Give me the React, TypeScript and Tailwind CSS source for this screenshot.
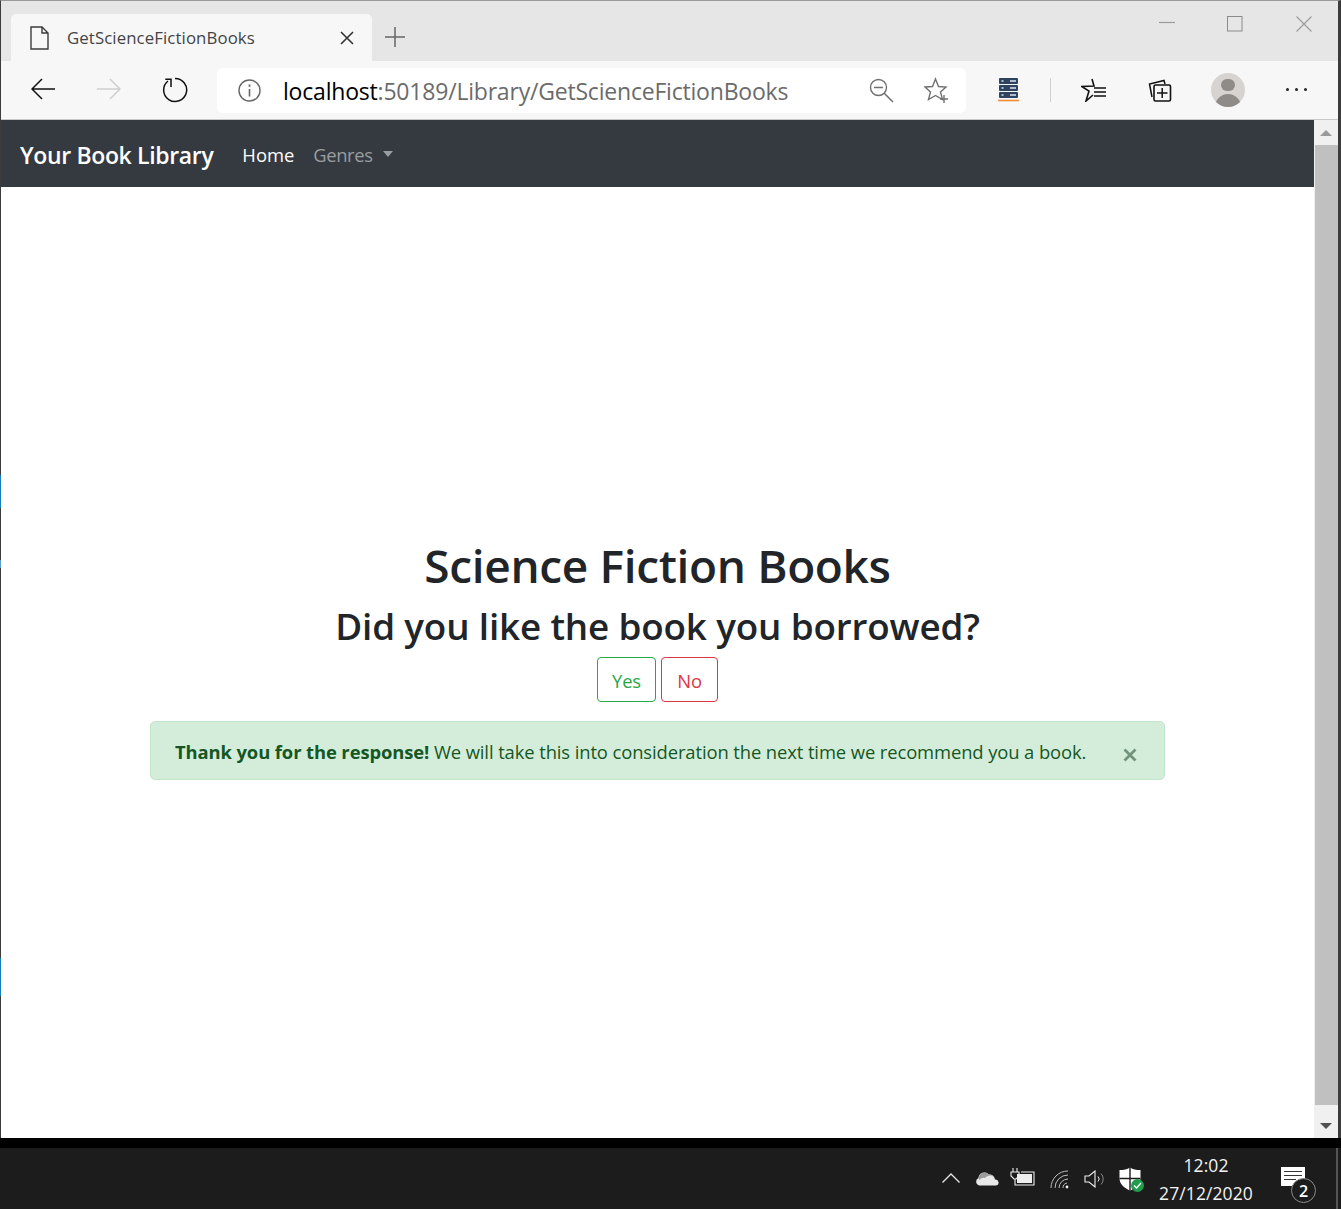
const font = "font-['Open_Sans','Noto_Sans',sans-serif]";

function Stroke({ w, h, children, className }: { w: number; h: number; children: React.ReactNode; className?: string }) {
  return (
    <svg width={w} height={h} viewBox={`0 0 ${w} ${h}`} fill="none" className={`shrink-0 ${className ?? ""}`}>
      {children}
    </svg>
  );
}

function TabStrip() {
  return (
    <div className="flex h-[60px] bg-[#e6e6e6] pl-[10px]">
      <div className="mt-[13px] flex h-[47px] w-[361px] items-center rounded-t-[5px] bg-[#f7f7f7] pl-[19px]">
        <Stroke w={19} h={24}>
          <path d="M1 1H12L18 7V23H1Z M12 1V7H18" stroke="#3c3c3c" strokeWidth="1.4" />
        </Stroke>
        <span className="ml-[18px] w-[271px] text-[16.8px] tracking-[0.1px] text-[#444]">GetScienceFictionBooks</span>
        <Stroke w={14} h={14} className="ml-[2px] mt-[1px]">
          <path d="M1 1L13 13M13 1L1 13" stroke="#333" strokeWidth="1.6" />
        </Stroke>
      </div>
      <Stroke w={20} h={20} className="ml-[13px] mt-[26px]">
        <path d="M10 0V20M0 10H20" stroke="#666" strokeWidth="1.5" />
      </Stroke>
      <div className="ml-auto mr-[26px] flex pt-[15px]">
        <Stroke w={16} h={16}>
          <path d="M0 6.5H16" stroke="#9a9a9a" strokeWidth="1.2" />
        </Stroke>
        <Stroke w={16} h={16} className="ml-[52px]">
          <rect x="0.5" y="0.5" width="14.5" height="14.5" stroke="#8a8a8a" />
        </Stroke>
        <Stroke w={16} h={16} className="ml-[53px]">
          <path d="M0.5 0.5L15.5 15.5M15.5 0.5L0.5 15.5" stroke="#9a9a9a" strokeWidth="1.1" />
        </Stroke>
      </div>
    </div>
  );
}

function Toolbar() {
  return (
    <div className="flex h-[59px] items-center border-b border-[#c9c9c9] bg-[#f7f7f7] pb-[1px]">
      <Stroke w={24} h={22} className="ml-[30px] mb-[1px]">
        <path d="M24 11H1M11 1L1 11L11 21" stroke="#111" strokeWidth="1.5" />
      </Stroke>
      <Stroke w={24} h={22} className="ml-[42px] mb-[1px]">
        <path d="M0 11H23M13 1L23 11L13 21" stroke="#cfcfcf" strokeWidth="1.5" />
      </Stroke>
      <Stroke w={26} h={26} className="ml-[41px]">
        <path d="M13 1.5A11.5 11.5 0 1 1 6 4" stroke="#111" strokeWidth="1.5" />
        <path d="M3.3 2.2H9V10" stroke="#111" strokeWidth="1.5" />
      </Stroke>
      <div className="ml-[29px] mt-[1px] flex h-[45px] w-[749px] items-center rounded-[6px] bg-white">
        <Stroke w={23} h={23} className="ml-[21px]">
          <circle cx="11.5" cy="11.5" r="10.5" stroke="#666" strokeWidth="1.4" />
          <path d="M11.5 10V17.5" stroke="#666" strokeWidth="1.6" />
          <path d="M11.5 5.5V7.7" stroke="#666" strokeWidth="1.8" />
        </Stroke>
        <span className="ml-[22px] mt-[2px] w-[586px] text-[23px] tracking-[-0.2px] text-[#6b6b6b]">
          <span className="text-black">localhost</span>:50189/Library/GetScienceFictionBooks
        </span>
        <Stroke w={25} h={25}>
          <circle cx="9.5" cy="9.5" r="8" stroke="#707070" strokeWidth="1.4" />
          <path d="M5 9.5H14M15 15L24 24" stroke="#707070" strokeWidth="1.5" />
        </Stroke>
        <Stroke w={26} h={26} className="ml-[30px]">
          <path d="M11.5 2L14.5 9.5L22 10L16.5 15L18.5 22.5L11.5 18.5L4.5 22.5L6.5 15L1 10L8.5 9.5Z" stroke="#707070" strokeWidth="1.4" />
          <path d="M20 18V26M16 22H24" stroke="#707070" strokeWidth="1.4" />
        </Stroke>
      </div>
      <Stroke w={21} h={24} className="ml-[32px]">
        <rect x="1" y="0" width="19" height="6" rx="1" fill="#2d4360" />
        <rect x="1" y="7" width="19" height="6" rx="1" fill="#2d4360" />
        <rect x="1" y="14" width="19" height="6" rx="1" fill="#2d4360" />
        <path d="M3.5 3H5.5M3.5 10H5.5M3.5 17H5.5M12 3H18M12 10H18M12 17H18" stroke="#dfe5ee" strokeWidth="1.4" />
        <path d="M0 22.5H21" stroke="#f28c38" strokeWidth="1.6" />
      </Stroke>
      <div className="ml-[31px] h-[24px] w-px bg-[#d0d0d0]" />
      <Stroke w={25} h={24} className="ml-[30px]">
        <path d="M11 1L13 8L0.8 8.5L8 13L5 23L12 17" stroke="#111" strokeWidth="1.6" />
        <path d="M13 10H25M13 14H25M13 18H25" stroke="#111" strokeWidth="1.5" />
      </Stroke>
      <Stroke w={24} h={24} className="ml-[42px]">
        <path d="M4 19L1.5 6L16 2.5L17 6" stroke="#111" strokeWidth="1.5" />
        <rect x="6" y="7" width="16.5" height="16" rx="1.5" stroke="#111" strokeWidth="1.6" />
        <path d="M14.2 10V20M9 15H19.5" stroke="#111" strokeWidth="1.5" />
      </Stroke>
      <div className="ml-[39px] flex size-[34px] flex-col items-center overflow-hidden rounded-full bg-[#d6d3d0]">
        <div className="mt-[6px] size-[14px] rounded-full bg-[#8f8b87]" />
        <div className="mt-[3px] h-[14px] w-[26px] rounded-t-full bg-[#8f8b87]" />
      </div>
      <div className="ml-[41px] flex gap-[6.5px]">
        <div className="size-[2.5px] rounded-full bg-[#222]" />
        <div className="size-[2.5px] rounded-full bg-[#222]" />
        <div className="size-[2.5px] rounded-full bg-[#222]" />
      </div>
    </div>
  );
}

function Navbar() {
  return (
    <nav className="flex h-[67px] items-center bg-[#343a40] pl-[19px] pt-[3px]">
      <span className="text-[23px] font-semibold leading-none tracking-[-0.35px] text-white">Your Book Library</span>
      <span className="ml-[29px] text-[18.4px] text-white">Home</span>
      <span className="ml-[19px] text-[18.4px] tracking-[-0.4px] text-[#9a9da0]">Genres</span>
      <div className="ml-[10px] mb-[3px] border-x-[5.5px] border-t-[6px] border-x-transparent border-t-[#9a9da0]" />
    </nav>
  );
}

function Content() {
  return (
    <main className="flex flex-1 flex-col items-center pt-[350px] text-[#212529]">
      <h1 className="text-[46px] font-semibold leading-[56px] tracking-[-0.35px]">Science Fiction Books</h1>
      <h2 className="mt-[10px] text-[36.8px] font-semibold leading-[46px] tracking-[-0.15px]">Did you like the book you borrowed?</h2>
      <div className="mt-[8px] flex gap-[5px]">
        <button className="h-[45px] w-[59px] rounded-[4px] border border-[#28a745] pt-[3px] text-[18.4px] tracking-[-0.12px] text-[#28a745]">Yes</button>
        <button className="h-[45px] w-[57px] rounded-[4px] border border-[#dc3545] pt-[3px] text-[18.4px] tracking-[-0.12px] text-[#dc3545]">No</button>
      </div>
      <div className="mt-[19px] flex h-[59px] w-[1015px] items-center rounded-[5px] border border-[#c3e6cb] bg-[#d4edda] pl-[24px] text-[18.4px] tracking-[-0.1px] text-[#155724]">
        <span className="mt-[3px] w-[948px] whitespace-nowrap">
          <strong className="font-bold">Thank you for the response!</strong> We will take this into consideration the next time we recommend you a book.
        </span>
        <Stroke w={14} h={14} className="mt-[8px]">
          <path d="M1.5 1.5L12.5 12.5M12.5 1.5L1.5 12.5" stroke="#71937b" strokeWidth="2.8" />
        </Stroke>
      </div>
    </main>
  );
}

function Scrollbar() {
  return (
    <div className="flex w-[24px] flex-col items-center bg-[#f0f0f0]">
      <div className="flex h-[25px] items-center">
        <div className="border-x-[6px] border-b-[6px] border-x-transparent border-b-[#9a9a9a]" />
      </div>
      <div className="w-[23px] flex-1 bg-[#c0c0c0]" />
      <div className="flex h-[33px] items-center pt-[9px]">
        <div className="border-x-[6px] border-t-[6px] border-x-transparent border-t-[#505050]" />
      </div>
    </div>
  );
}

function Tray() {
  return (
    <footer className="flex h-[61px] items-center bg-[#1c1c1c] pl-[942px] text-[#f2f2f2]">
      <Stroke w={18} h={10} className="mb-[2px]">
        <path d="M0.5 9.5L9 1L17.5 9.5" stroke="#e6e6e6" strokeWidth="1.3" />
      </Stroke>
      <Stroke w={25} h={16} className="ml-[15px] mb-[2px]">
        <path d="M4 15.5A4 4 0 0 1 3.5 8A6 6 0 0 1 14 4.5A5.5 5.5 0 0 1 20 9.5A3 3 0 0 1 21 15.5Z" fill="#e8e8e8" />
        <path d="M3.5 8A6 6 0 0 1 14 4.5A5.5 5.5 0 0 1 18 6.5A6 6 0 0 0 10 8A5 5 0 0 0 4.5 10Z" fill="#9c9c9c" />
      </Stroke>
      <Stroke w={25} h={19} className="ml-[10px] mb-[2px]">
        <path d="M3 0V4M7 0V4M1 4H9V8L6 11H4L1 8ZM5 11V17H24V4H11" stroke="#eee" strokeWidth="1.1" />
        <rect x="7" y="6" width="15" height="9" fill="#eee" />
      </Stroke>
      <Stroke w={20} h={20} className="ml-[15px]">
        <path d="M1 19A17 17 0 0 1 18 2M5 19A13 13 0 0 1 18 6M9 19A9 9 0 0 1 18 10M13 19A5 5 0 0 1 17 14" stroke="#bdbdbd" strokeWidth="1" />
        <circle cx="17" cy="18" r="1.4" fill="#eee" />
      </Stroke>
      <Stroke w={22} h={18} className="ml-[14px]">
        <path d="M1 6H5L11 1V17L5 12H1Z" stroke="#eee" strokeWidth="1.1" />
        <path d="M14 6.5A3.5 3.5 0 0 1 14 11.5" stroke="#eee" />
        <path d="M17 3.5A8 8 0 0 1 17 14.5" stroke="#888" />
      </Stroke>
      <div className="relative ml-[13px] size-[24px]">
        <Stroke w={22} h={24}>
          <path d="M11 0.5C14 2.5 17 3 21.5 3V11C21.5 17 17 21 11 23.5C5 21 0.5 17 0.5 11V3C5 3 8 2.5 11 0.5Z" fill="#fff" />
          <path d="M11 0V23.5M0.5 11.5H21.5" stroke="#1c1c1c" strokeWidth="1.4" />
        </Stroke>
        <div className="absolute -bottom-[1px] -right-[1px] flex size-[13px] items-center justify-center rounded-full bg-[#1f9d4d]">
          <Stroke w={9} h={7}>
            <path d="M1 3.5L3.5 6L8 1" stroke="#fff" strokeWidth="1.3" />
          </Stroke>
        </div>
      </div>
      <div className="ml-[13px] flex w-[100px] flex-col items-center gap-[6px] text-[17.5px] leading-[22px] tracking-[0.1px]">
        <span>12:02</span>
        <span className="whitespace-nowrap">27/12/2020</span>
      </div>
      <div className="relative ml-[25px] mt-[13px] size-[36px]">
        <div className="flex h-[19px] w-[24px] flex-col gap-[3px] bg-white pl-[3px] pt-[4px]">
          <div className="h-px w-[18px] bg-[#333]" />
          <div className="h-px w-[18px] bg-[#333]" />
          <div className="h-px w-[12px] bg-[#333]" />
        </div>
        <div className="absolute left-[10px] top-[11px] flex size-[25px] items-center justify-center rounded-full border border-[#8c8c8c] bg-[#1c1c1c] text-[16px] font-semibold leading-none text-white">2</div>
      </div>
      <div className="ml-[19px] h-full w-[2px] bg-[#555]" />
    </footer>
  );
}

export default function App() {
  return (
    <div className={`relative flex h-[1209px] w-[1341px] flex-col overflow-hidden bg-black ${font}`}>
      <div className="flex h-[1138px] flex-col border-l border-r-[3px] border-t border-[#3c3c3c] border-t-[#9a9a9a]">
        <TabStrip />
        <Toolbar />
        <div className="flex flex-1">
          <div className="flex flex-1 flex-col bg-white">
            <Navbar />
            <Content />
          </div>
          <Scrollbar />
        </div>
      </div>
      <div className="h-[10px] bg-black" />
      <Tray />
      <div className="absolute left-0 top-[475px] h-[33px] w-px bg-[#1a7fc0]" />
      <div className="absolute left-0 top-[560px] h-[8px] w-px bg-[#5b9bc4]" />
      <div className="absolute left-0 top-[958px] h-[38px] w-px bg-[#1a7fc0]" />
    </div>
  );
}
